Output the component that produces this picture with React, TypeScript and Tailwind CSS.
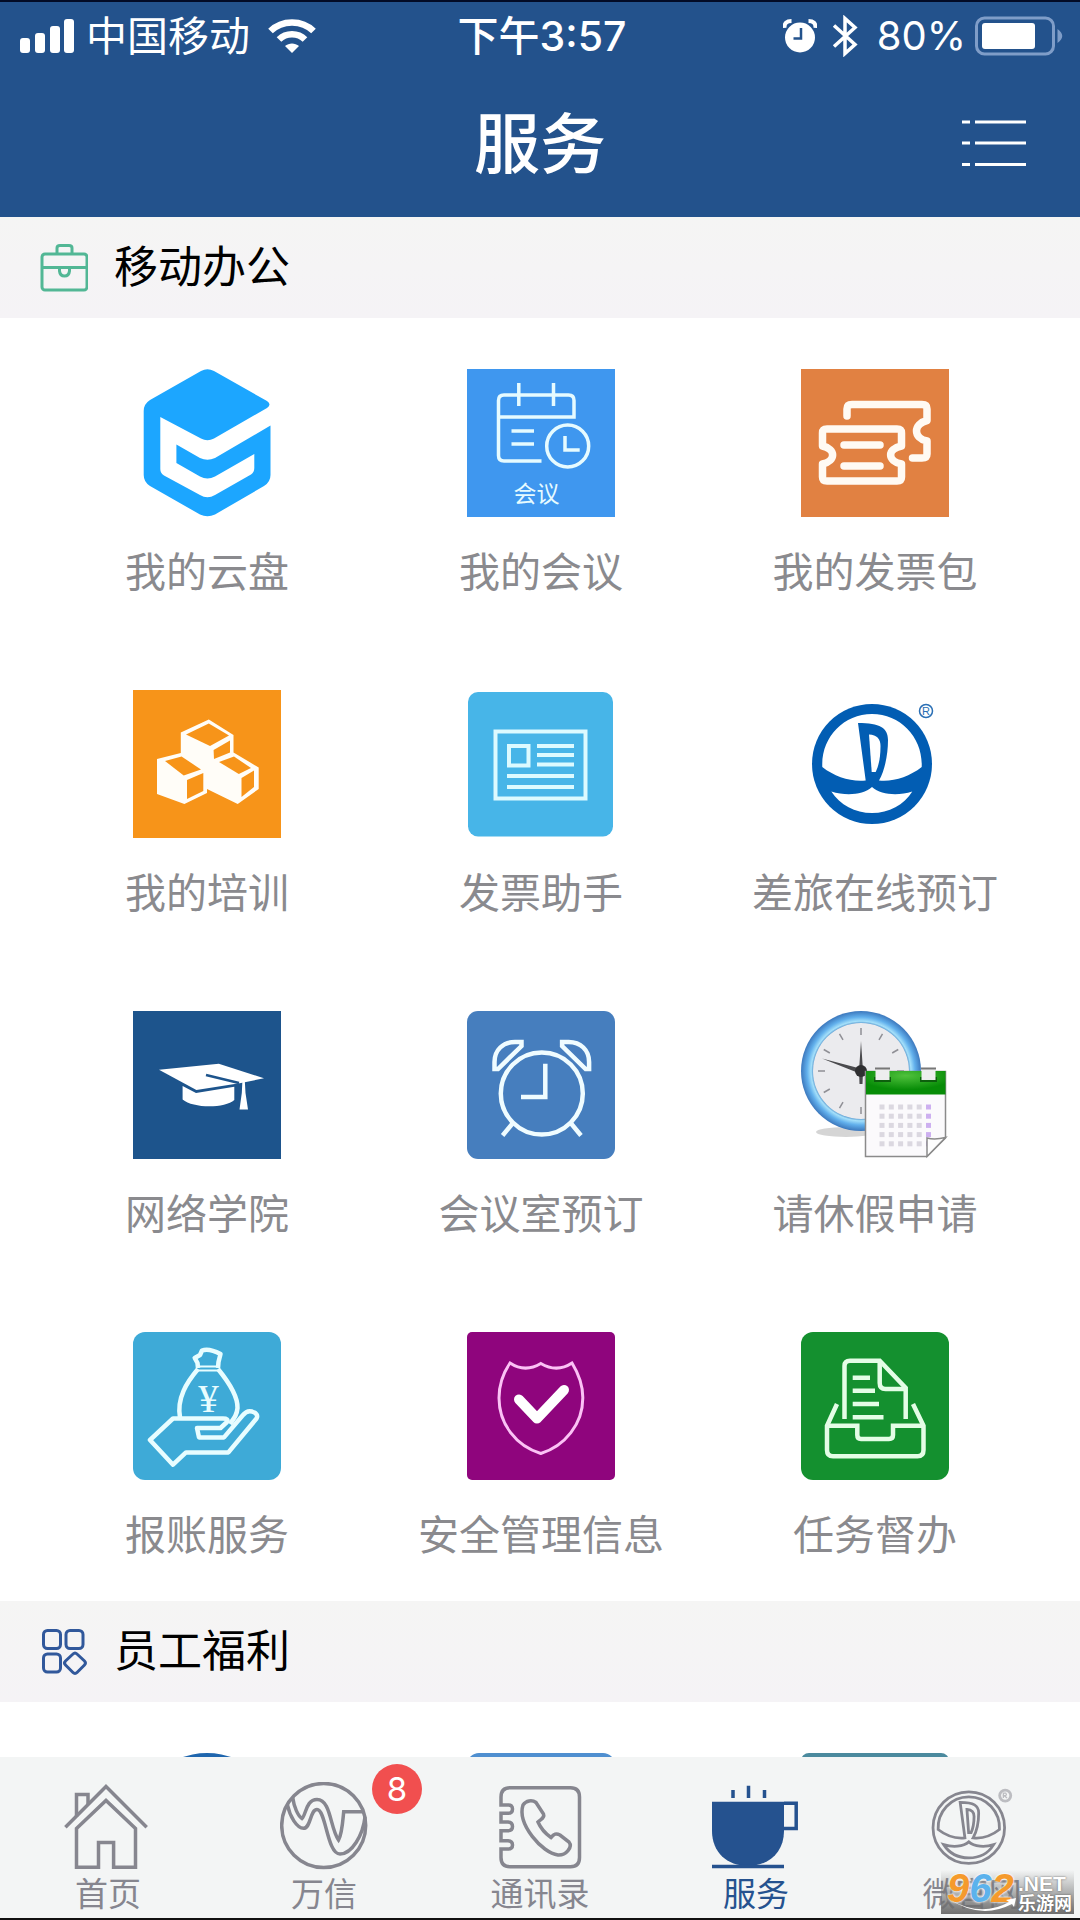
import React, { useState } from "react";
import clsx from "clsx";

type AppEntry = {
  name: string;
  icon: React.ReactNode;
};

type TabEntry = {
  name: string;
  icon: React.ReactNode;
  badge?: number;
};

const Tile = ({
  bg,
  rx = 0,
  children,
}: {
  bg?: string;
  rx?: number;
  children?: React.ReactNode;
}) => (
  <svg viewBox="0 0 148 148" className="size-37" fill="none" aria-hidden="true">
    {bg && <rect width="148" height="148" rx={rx} fill={bg} />}
    {children}
  </svg>
);

// shared by the travel tile and the last tab
const LOGO_SKY =
  "M21.3 77C20 48 42 24 71 24S122 48 120.7 77C108 87 92 92 78 90.5C84 80 87 64 87 50C87 38 79 33 57 33L64.7 90.5C50 92 34 87 21.3 77Z";
const LOGO_SEA =
  "M30.3 101.5C45 106 62 105 71 97C80 105 97 106 111.3 101.5C103 115 88 123 71 123S39 115 30.3 101.5Z";
const LOGO_SAIL = "M68 44.5C76 45 79.5 49 79.5 56C79.5 67 78 75 74.7 82H70.7Z";

const CloudIcon = () => (
  <Tile>
    <path
      fill="#1ca6ff"
      d="M68 2Q74.4 -1.5 81 2L134 32Q139 35.5 134 39L81 69.5Q74.4 73 68 69.5L27.3 48V100Q27.3 104 31 106.5L67 126Q74.4 130.5 82 126L118 105.5Q121.3 103 121.3 99V85L82 107.5Q74.4 111.5 67 107.5L43.4 94V75.5L67 89Q74.4 92.5 82 89L137.5 56.5V106Q137.5 113 131 117L82 145.5Q74.4 149 67 145.5L17 117Q10.7 113 10.7 106V42Q10.7 35 17 31Z"
    />
  </Tile>
);

const MeetingIcon = () => (
  <Tile bg="#3f97ef">
    <g stroke="#e6fbff" strokeWidth="3.5">
      <path d="M74.5 92H37Q31.5 92 31.5 86.5V31.5Q31.5 26 37 26H101.5Q107 26 107 31.5V48H31.5M51.8 14V37M86.5 14V37M44.5 62H67M44.5 75H67" />
      <circle cx="100.7" cy="77" r="21" />
      <path d="M98 67V81H112.7" />
    </g>
    <text
      x="69.5"
      y="133"
      textAnchor="middle"
      fill="#e6fbff"
      className="font-['Noto_Sans_CJK_SC',sans-serif] text-[23px]"
    >
      会议
    </text>
  </Tile>
);

const InvoiceIcon = () => (
  <Tile bg="#e18142">
    <g stroke="#fffaf3" strokeWidth="7.5" strokeLinecap="round" strokeLinejoin="round">
      <path d="M46 47V40Q46 35.5 51 35.5H121Q126 35.5 126 40V51.5C112 55 112 69 126 72V85Q126 89 121 89H111.5" />
      <path d="M21.5 64Q21.5 60 26 60H96Q100.5 60 100.5 64V77C86 80 86 92 100.5 95V108Q100.5 112 96 112H26Q21.5 112 21.5 108V95C35 92 35 80 21.5 77Z" />
      <path d="M43 76H79M43 97H79" />
    </g>
  </Tile>
);

const CubesIcon = () => (
  <Tile bg="#f79419">
    <path
      fill="#fffdf8"
      d="M75.8 29.5L100.5 45V62.5L125.7 77.5V99L104.7 114L74 99V103L51.4 114L24 104V69L47.8 63V42.5Z"
    />
    <g fill="#f79419">
      <path d="M75.8 33.5L96 45.5L77 56L53 44.5Z" />
      <path d="M80.6 60L97 50.5V62.5L81 69Z" />
      <path d="M32 71L48.6 66.5L68 79.5L50.7 85.5Z" />
      <path d="M54 90L70.3 83V101L54 109Z" />
      <path d="M86 72L101 66.5L118 78L105.8 84Z" />
      <path d="M108.5 88L121 80.5V97L108.5 107Z" />
    </g>
  </Tile>
);

const NewsIcon = () => (
  <Tile>
    <rect x="1" y="2" width="145" height="144.5" rx="10" fill="#47b5e8" />
    <g stroke="#dcfaff" strokeWidth="4">
      <path d="M28.5 41.5H118.5V108.5H28.5Z" />
      <path d="M42 56H61.5V75.5H42Z" />
      <path d="M70 56H107M70 65H107M70 74.5H107M40 86H107M40 97H107" />
    </g>
  </Tile>
);

const TravelIcon = () => (
  <Tile>
    <circle cx="71" cy="74" r="60" fill="#025db3" />
    <path fill="#fff" d={LOGO_SKY} />
    <path fill="#fff" d={LOGO_SEA} />
    <path fill="#fff" d={LOGO_SAIL} />
    <circle cx="125" cy="21" r="6.5" stroke="#2a6fb5" strokeWidth="1.5" />
    <text
      x="125"
      y="25"
      textAnchor="middle"
      fill="#2a6fb5"
      className="font-['Liberation_Sans',sans-serif] text-[11px]"
    >
      R
    </text>
  </Tile>
);

const AcademyIcon = () => (
  <Tile bg="#1d548c">
    <g fill="#fff">
      <path d="M26 58.7L85.8 52.7L131 67.3L108 72L63.4 79Z" />
      <path d="M49.6 75L63 82L101.3 75.7V89C92 97.5 60 97.5 49.6 88.5Z" />
      <path d="M109.5 68H111.7L112.5 82L115 98.5H106.5L108.8 82Z" />
    </g>
    <path stroke="#1d548c" strokeWidth="2.5" d="M73 64L106 72" />
  </Tile>
);

const AlarmIcon = () => (
  <Tile bg="#467ebe" rx={11}>
    <g stroke="#effcff" strokeWidth="4.5">
      <circle cx="74.8" cy="82.5" r="41" />
      <path d="M78.3 52.7V86H54" />
      <path d="M27.5 58V51C27.5 39 36 31 48 31H54.5V35L31 58Z" />
      <path d="M122.1 58V51C122.1 39 113.6 31 101.6 31H95.1V35L118.6 58Z" />
      <path d="M45.5 112.5L35.6 124.5M104.1 112.5L114 124.5" />
    </g>
  </Tile>
);

const LeaveIcon = () => (
  <Tile>
    <defs>
      <radialGradient id="ring" cx="0.5" cy="0.5" r="0.5">
        <stop offset="0.78" stopColor="#3d7fc0" />
        <stop offset="0.83" stopColor="#a5e0fa" />
        <stop offset="0.9" stopColor="#62b0ec" />
        <stop offset="1" stopColor="#3c78bd" />
      </radialGradient>
      <radialGradient id="lawn" cx="0.5" cy="0.2" r="0.6">
        <stop offset="0" stopColor="#4fc13c" />
        <stop offset="1" stopColor="#078c07" />
      </radialGradient>
    </defs>
    <ellipse cx="45" cy="121" rx="30" ry="5" fill="#b9b9b9" opacity="0.6" />
    <circle cx="60" cy="60" r="60" fill="url(#ring)" />
    <circle cx="60" cy="60" r="48" fill="#ebebee" />
    {Array.from({ length: 12 }, (_, i) => (
      <path
        key={i}
        d="M60 17V24"
        stroke="#8f8f95"
        strokeWidth="1.5"
        transform={`rotate(${i * 30} 60 60)`}
      />
    ))}
    <path fill="#4a4a4d" d="M60 30L62 60L61.5 73H58.5L58 60ZM21 47.5L61 58L60 63Z" />
    <circle cx="60" cy="60" r="6" fill="#2f2f31" />
    <path
      fill="#fbfafc"
      stroke="#8b8b8b"
      strokeWidth="1.5"
      d="M64.5 60.5H144.5V127L126 145.5H64.5Z"
    />
    <path fill="url(#lawn)" d="M65 60H144.5V83.5H65Z" />
    <path fill="#0d5f0d" d="M73 66H90V71H73ZM119 66H136V71H119Z" />
    <path fill="#eeeeee" d="M74.5 58H88.5V69H74.5ZM120.5 58H134.5V69H120.5Z" />
    <path stroke="#777" strokeWidth="2" d="M74 57.5H89M120 57.5H135" />
    {[0, 1, 2, 3, 4].map((row) =>
      [0, 1, 2, 3, 4, 5].map((col) => (
        <rect
          key={`${row}-${col}`}
          x={78.5 + col * 9.3}
          y={93.5 + row * 9.2}
          width="5"
          height="5"
          fill={col === 5 ? "#cdb0f0" : "#dbd8e0"}
        />
      )),
    )}
    <path
      fill="#fdfdfd"
      stroke="#8b8b8b"
      strokeWidth="1.5"
      d="M126 145.5V127Q134 129 144.5 126.5Z"
    />
  </Tile>
);

const ReimburseIcon = () => (
  <Tile bg="#3eaad7" rx={12}>
    <g stroke="#e8fdff" strokeWidth="4.5" strokeLinejoin="round">
      <path d="M65 36L64.5 31L61.7 26L67 23L69 18.5C74 16.5 80 18 87.5 22L85.5 30L85 36" />
      <path strokeWidth="2" d="M65 34.5H85M65 38.5H85" />
      <path d="M65 37C54 50 43.5 66 47 85.5M85 37C94 48 105 63 104.5 76C104 82 102 85 97 92" />
      <path d="M17 108L40 86.5H90Q96 86.5 94 90L87.5 96H64L66 105.4H91L110 83Q114 78 119 79.5Q126 82 123.5 86.5L95.4 120.4H53L40 132.7Z" />
    </g>
    <text
      x="75.5"
      y="80"
      textAnchor="middle"
      fill="#e8fdff"
      className="font-['Liberation_Serif',serif] text-[41px]"
    >
      ¥
    </text>
  </Tile>
);

const SafetyIcon = () => (
  <Tile bg="#8f057d" rx={5}>
    <path
      stroke="#fbc2f5"
      strokeWidth="3"
      d="M43 31Q58 41 73.8 31.5Q90 41 105 31Q116 49 115.8 66C115.8 92 98 114 73.8 121.5C49 114 32 92 32 66Q32 47 43 31Z"
    />
    <path
      stroke="#fff"
      strokeWidth="10"
      strokeLinecap="round"
      strokeLinejoin="round"
      d="M52 67.5L70 86.5L97 58"
    />
  </Tile>
);

const TaskIcon = () => (
  <Tile bg="#14902f" rx={12}>
    <g stroke="#e4fde6" strokeWidth="4.5">
      <path d="M43.5 87V34Q43.5 28.7 49 28.7H78.7L104.7 56V87" />
      <path d="M78.7 29V51Q78.7 57 84.5 57H104.7" />
      <path d="M51.7 45.7H69M51.7 58.7H74M51.7 72H78M51.7 85.3H82.5" />
      <path d="M36 72L26 93.7V118Q26 124.3 32 124.3H116.5Q122.5 124.3 122.5 118V93.7L112 72" />
      <path d="M26 93.7H56.3V103Q56.3 107 60 107H88Q92 107 92 103V93.7H122.5" />
    </g>
  </Tile>
);

const TabSvg = ({ children }: { children: React.ReactNode }) => (
  <svg
    viewBox="0 0 88 88"
    className="size-22"
    fill="none"
    stroke="currentColor"
    strokeWidth="3.5"
    aria-hidden="true"
  >
    {children}
  </svg>
);

const HomeIcon = () => (
  <TabSvg>
    <path d="M1.4 45.3L42 4.5L82.7 45.3" />
    <path d="M12.5 34.7V12.5H24V22" />
    <path d="M12.5 85.3V46.5L42 18.5L71.5 46.5V85.3H49.6V60.5H34.5V85.3Z" />
  </TabSvg>
);

const ChatIcon = () => (
  <TabSvg>
    <circle cx="43.7" cy="43.5" r="42" />
    <path d="M12.7 15.5C14 25 18 34 22 36.5C26 33 26 17.5 37 17.5C51 17.5 50 46 58.5 58C62 52 62.5 42 63.7 29.7H83" />
    <path d="M7.5 23C10 35 17 46.3 23.5 46.3C31 46.3 30 27.5 37 27.5C46 27.5 47 72 60 72C72 72 83 53 85 35" />
  </TabSvg>
);

const ContactsIcon = () => (
  <TabSvg>
    <path d="M5 23V15Q5 5.7 14 5.7H74.5Q83.5 5.7 83.5 15V75.5Q83.5 84.7 74.5 84.7H14Q5 84.7 5 75.5V67H12Q16.5 67 16.5 63T12 58.7H5V48.7H12Q16.5 48.7 16.5 44.5T12 40H5V31.3H12Q16.5 31.3 16.5 27T12 23Z" />
    <path d="M27 23C30 18.5 36 17.5 40 20.5L47.5 32C49 36 45 37 42 40C45 47 50 52 55 55.5C58 52 60 51 64 53L73 60C77 65 70 73.5 62 73C46 71 21 42 27 23Z" />
  </TabSvg>
);

const CupIcon = () => (
  <TabSvg>
    <path fill="currentColor" stroke="none" d="M0 19.7H72V49C72 70 57 84 36 84S0 70 0 49Z" />
    <path d="M72 21.2H84.2V46.5H72M0 84.5H72" />
    <path d="M21 8V16M36.5 3.7V16M52.5 8V16" />
  </TabSvg>
);

const SiteIcon = () => (
  <TabSvg>
    <g transform="translate(-3 0) scale(0.617)" strokeWidth="4.5">
      <circle cx="71" cy="74" r="58" />
      <path d={LOGO_SKY} />
      <path d={LOGO_SEA} />
      <path d={LOGO_SAIL} />
      <g opacity="0.5">
        <circle cx="130" cy="22" r="9" />
        <path d="M127 26V18H131Q133 20 131 22H128L133 26" strokeWidth="2" />
      </g>
    </g>
  </TabSvg>
);

const officeApps: AppEntry[] = [
  { name: "我的云盘", icon: <CloudIcon /> },
  { name: "我的会议", icon: <MeetingIcon /> },
  { name: "我的发票包", icon: <InvoiceIcon /> },
  { name: "我的培训", icon: <CubesIcon /> },
  { name: "发票助手", icon: <NewsIcon /> },
  { name: "差旅在线预订", icon: <TravelIcon /> },
  { name: "网络学院", icon: <AcademyIcon /> },
  { name: "会议室预订", icon: <AlarmIcon /> },
  { name: "请休假申请", icon: <LeaveIcon /> },
  { name: "报账服务", icon: <ReimburseIcon /> },
  { name: "安全管理信息", icon: <SafetyIcon /> },
  { name: "任务督办", icon: <TaskIcon /> },
];

const tabs: TabEntry[] = [
  { name: "首页", icon: <HomeIcon /> },
  { name: "万信", icon: <ChatIcon />, badge: 8 },
  { name: "通讯录", icon: <ContactsIcon /> },
  { name: "服务", icon: <CupIcon /> },
  { name: "微官网", icon: <SiteIcon /> },
];

const StatusBar = () => (
  <div className="flex items-center justify-between border-t-2 border-[#020b26] py-1 pr-4 pl-5 text-[41px] leading-[60px]">
    <div className="flex flex-1 items-center gap-2.5">
      <svg viewBox="0 0 56 36" className="h-9 w-14" fill="currentColor">
        <rect x="0" y="20" width="10" height="15" rx="3" />
        <rect x="15" y="15" width="10" height="20" rx="3" />
        <rect x="30" y="8" width="10" height="27" rx="3" />
        <rect x="44" y="1" width="10" height="34" rx="3" />
      </svg>
      <span>中国移动</span>
      <svg viewBox="0 0 48 36" className="ml-2 h-9 w-12" fill="none" stroke="currentColor" strokeWidth="6.5">
        <path d="M2.5 13C14 1.5 34 1.5 45.5 13" />
        <path d="M11 21.5C18 14.5 30 14.5 37 21.5" />
        <path d="M24 35L17 28C21 24.5 27 24.5 31 28Z" fill="currentColor" stroke="none" />
      </svg>
    </div>
    <span className="font-medium">下午3:57</span>
    <div className="flex flex-1 items-center justify-end gap-3">
      <svg viewBox="0 0 34 34" className="size-8.5" fill="none">
        <circle cx="17" cy="18.5" r="15" fill="currentColor" />
        <path d="M1.5 9Q1 2 8.5 2M32.5 9Q33 2 25.5 2" stroke="currentColor" strokeWidth="4" />
        <path d="M18 9V19.5H10.5" stroke="#23528c" strokeWidth="2.5" />
      </svg>
      <svg viewBox="0 0 30 42" className="h-10.5 w-8" fill="none" stroke="currentColor" strokeWidth="3.5">
        <path d="M4 10.5L25 29.5L15 38.5V3.5L25 12.5L4 31.5" />
      </svg>
      <div className="flex items-center gap-2 pl-1">
        <span className="text-[40px]">80%</span>
        <svg viewBox="0 0 90 40" className="h-10 w-[90px]" fill="none">
          <rect x="2.5" y="2" width="77" height="36" rx="8" stroke="#7f9dc8" strokeWidth="3" />
          <rect x="8" y="7" width="53" height="26" rx="3" fill="currentColor" />
          <path d="M83.5 13Q93 20 83.5 27Z" fill="#7f9dc8" />
        </svg>
      </div>
    </div>
  </div>
);

const SectionHeader = ({ title, icon }: { title: string; icon: React.ReactNode }) => (
  <div className="flex items-center gap-6.5 bg-linear-to-b from-[#f5f5f4] to-[#f5f3f6] px-10 py-4">
    {icon}
    <h2 className="text-[44px] leading-[69px] text-black">{title}</h2>
  </div>
);

const BriefcaseIcon = () => (
  <svg viewBox="0 0 48 48" className="size-12" fill="none" stroke="#52b795" strokeWidth="3">
    <rect x="2" y="10" width="45" height="36" rx="3" />
    <path d="M17 10V4Q17 1.5 20 1.5H29Q32 1.5 32 4V10M2 23.5H47M19.5 24V27Q20 32 24.5 32T29.5 27V24" />
  </svg>
);

const WidgetsIcon = () => (
  <svg viewBox="0 0 48 48" className="size-12" fill="none" stroke="#31589b" strokeWidth="3">
    <rect x="3.5" y="2.5" width="17" height="18" rx="4" />
    <rect x="26" y="2.5" width="17" height="18" rx="4" />
    <rect x="3.5" y="26" width="17" height="18" rx="4" />
    <path d="M33 26Q35 24 37 26L44.500 33Q46.500 35 44.500 37L37 44.500Q35 46.500 33 44.500L25.500 37Q23.500 35 25.500 33Z" />
  </svg>
);

const Watermark = () => (
  <div className="pointer-events-none absolute right-1.5 bottom-1 flex h-11 w-[133px] items-start bg-linear-to-b from-transparent to-[#6f6f6f] font-['Liberation_Sans','Noto_Sans_CJK_SC',sans-serif] font-bold text-white">
    <span className="relative h-11 flex-1 pl-1.5 text-[40px] leading-9 italic [text-shadow:0_0_2px_#fff,0_0_3px_#fff]">
      <span className="text-[#f59a2c]">9</span>
      <span className="text-[#5cb2ec]">6</span>
      <span className="text-[#f59a2c]">2</span>
      <svg viewBox="0 0 70 14" className="absolute bottom-0.5 left-2 h-3.5 w-[70px]" fill="#fff">
        <path d="M0 1Q32 20 60 4L57 2L67 0L65 9L63 6Q32 22 0 1Z" />
      </svg>
    </span>
    <span className="flex w-14 flex-col pt-1 text-[18px] leading-5 [text-shadow:0_0_2px_#555]">
      <span className="text-[21px]">.NET</span>
      <span>乐游网</span>
    </span>
  </div>
);

export default function App() {
  const [activeTab, setActiveTab] = useState("服务");

  return (
    <div className="flex h-screen w-full flex-col overflow-hidden bg-white font-['Inter','Noto_Sans_CJK_SC',sans-serif]">
      <header className="bg-[#23528c] text-white">
        <StatusBar />
        <div className="grid h-[147px] grid-cols-3 items-center px-13">
          <h1 className="col-start-2 text-center text-[66px] leading-20 font-medium">服务</h1>
          <button type="button" aria-label="菜单" className="cursor-pointer justify-self-end">
            <svg viewBox="0 0 66 48" className="h-12 w-[66px]" stroke="currentColor" strokeWidth="3">
              <path d="M0 2H8M13 2H64M0 23H8M13 23H64M0 44.5H8M13 44.5H64" />
            </svg>
          </button>
        </div>
      </header>

      <main className="min-h-0 flex-1 overflow-y-auto [scrollbar-width:none]">
        <section>
          <SectionHeader title="移动办公" icon={<BriefcaseIcon />} />
          <div className="grid grid-cols-3 gap-y-22 pt-[51px] pr-[38px] pb-9 pl-10">
            {officeApps.map((app) => (
              <a
                key={app.name}
                href="#"
                className="flex flex-col items-center gap-[25px] text-[41px] leading-[60px] whitespace-nowrap text-[#8a8a8e]"
              >
                {app.icon}
                {app.name}
              </a>
            ))}
          </div>
        </section>
        <section>
          <SectionHeader title="员工福利" icon={<WidgetsIcon />} />
          <div className="grid grid-cols-3 justify-items-center pt-[51px] pr-[38px] pb-9 pl-10">
            <div className="size-37 rounded-full bg-[#1f66ae]" />
            <div className="size-37 rounded-xl bg-[#4f8fd0]" />
            <div className="size-37 rounded-lg bg-[#4b8a9e]" />
          </div>
        </section>
      </main>

      <nav className="relative grid grid-cols-5 border-b-2 border-[#111] bg-[#f3f5f5] pt-[25px]">
        {tabs.map((tab) => (
          <button
            key={tab.name}
            type="button"
            onClick={() => setActiveTab(tab.name)}
            className={clsx(
              "relative flex cursor-pointer flex-col items-center text-[33px] leading-12",
              activeTab === tab.name ? "text-[#25528f]" : "text-[#86868f]",
            )}
          >
            {tab.icon}
            {tab.name}
            {tab.badge && (
              <span className="absolute -top-4.5 left-1/2 ml-12 flex size-[50px] items-center justify-center rounded-full bg-[#f14f4f] text-[33px] text-white">
                {tab.badge}
              </span>
            )}
          </button>
        ))}
        <Watermark />
      </nav>
    </div>
  );
}
